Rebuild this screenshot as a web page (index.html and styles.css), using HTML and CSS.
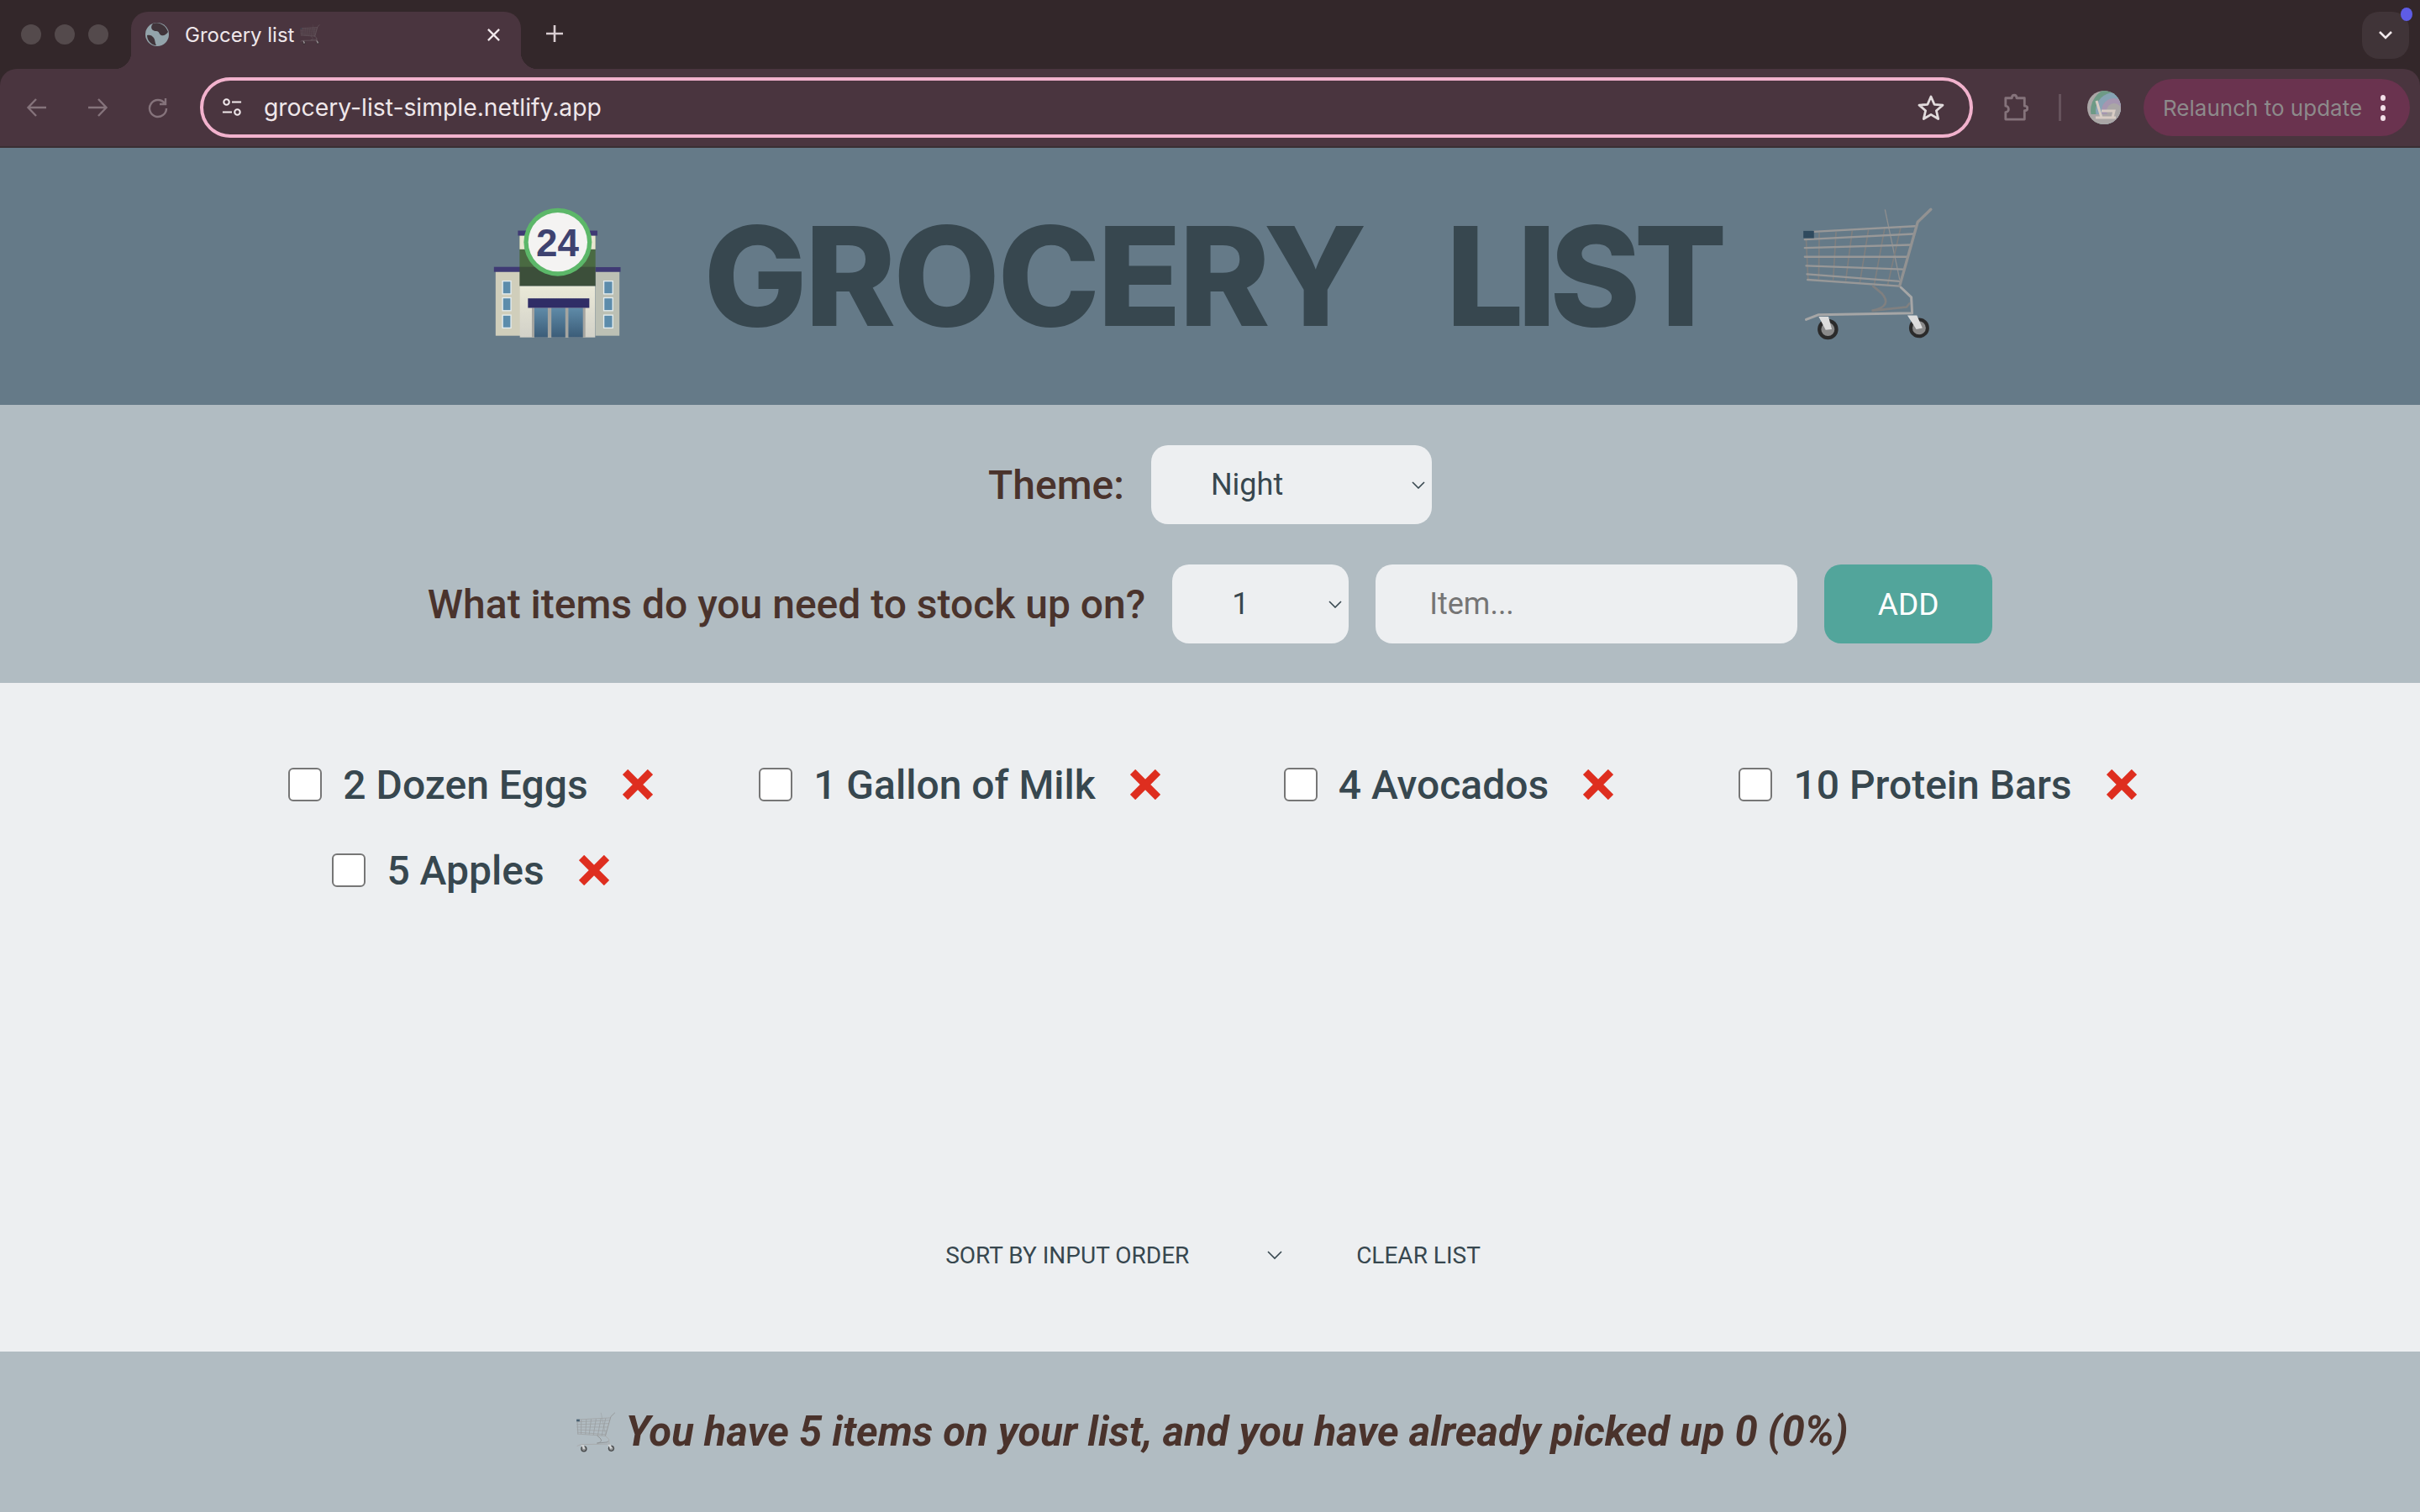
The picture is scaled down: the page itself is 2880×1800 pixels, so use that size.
FILE: index.html
```html
<!DOCTYPE html>
<html lang="en">
<head>
<meta charset="utf-8">
<title>Grocery list</title>
<link rel="stylesheet" href="styles.css">
</head>
<body>

<svg class="sprites" xmlns="http://www.w3.org/2000/svg">
  <defs>
    <linearGradient id="glass" x1="0" y1="0" x2="0" y2="1"><stop offset="0" stop-color="#5f8ba8"/><stop offset="1" stop-color="#3b5c78"/></linearGradient>
    <linearGradient id="cream" x1="0" y1="0" x2="0" y2="1"><stop offset="0" stop-color="#eae9d8"/><stop offset="1" stop-color="#d2d1c8"/></linearGradient>
    <symbol id="cart" viewBox="100 70 470 482">
      <g fill="none" stroke-linecap="round">
        <path d="M398 82 450 330" stroke="#8f8f8f" stroke-width="4"/>
        <g stroke="#7f7f7f" stroke-width="5">
          <path d="M162 165 160 328M222 162 212 332M280 158 257 335M338 155 308 340M396 150 360 345M453 148 408 348M115 188 122 332"/>
        </g>
        <g stroke="#989898" stroke-width="7">
          <path d="M140 160 505 140M110 188 498 168M110 218 490 207M110 250 475 250M115 282 462 295M118 312 450 338M120 332 450 355"/>
        </g>
        <path d="M450 355 515 125 562 80" stroke="#929292" stroke-width="10" stroke-linejoin="round"/>
        <path d="M355 355 385 380C412 410 405 432 350 443L475 430 485 418" stroke="#808080" stroke-width="8"/>
        <path d="M455 360 492 395 495 452M115 475 158 458 495 452" stroke="#a6a6a6" stroke-width="9" stroke-linejoin="round"/>
      </g>
      <rect x="105" y="157" width="38" height="26" fill="#2f4a5e"/>
      <circle cx="193" cy="510" r="37" fill="#2b2b2b"/>
      <circle cx="193" cy="510" r="24" fill="#8a8a8a"/>
      <circle cx="520" cy="505" r="36" fill="#2b2b2b"/>
      <circle cx="520" cy="505" r="24" fill="#8a8a8a"/>
      <path d="M160 465H195L207 510 185 512ZM478 460H512L532 505 510 510Z" fill="#dcdcdc"/>
    </symbol>
    <symbol id="store" viewBox="82 80 460 470">
      <rect x="90" y="310" width="88" height="230" fill="#d0cebb"/>
      <rect x="448" y="310" width="86" height="230" fill="#bcc0b4"/>
      <rect x="84" y="293" width="94" height="18" fill="#3f3a74"/>
      <rect x="448" y="294" width="90" height="17" fill="#3f3a74"/>
      <rect x="176" y="180" width="272" height="114" fill="#4a6a42"/>
      <rect x="176" y="293" width="272" height="69" fill="#3c4f3a"/>
      <rect x="176" y="180" width="272" height="50" fill="#e8e6d0"/>
      <rect x="170" y="163" width="285" height="18" fill="#3f3a74"/>
      <rect x="177" y="362" width="270" height="184" fill="url(#cream)"/>
      <rect x="220" y="440" width="192" height="106" fill="#a5a5a0"/>
      <rect x="229" y="440" width="48" height="106" fill="url(#glass)"/>
      <rect x="290" y="440" width="50" height="106" fill="url(#glass)"/>
      <rect x="351" y="440" width="52" height="106" fill="url(#glass)"/>
      <rect x="206" y="406" width="220" height="34" fill="#2f2d66"/>
      <g fill="#5c8cab" stroke="#e6eef0" stroke-width="4">
        <rect x="115" y="344" width="30" height="46"/>
        <rect x="115" y="404" width="30" height="46"/>
        <rect x="115" y="466" width="30" height="46"/>
        <rect x="478" y="344" width="32" height="46"/>
        <rect x="478" y="404" width="32" height="46"/>
        <rect x="478" y="466" width="32" height="46"/>
      </g>
      <circle cx="313" cy="204" r="122" fill="#5cb769"/>
      <circle cx="313" cy="204" r="106" fill="#f4f3f2"/>
      <text x="312" y="255" text-anchor="middle" class="store-num">24</text>
    </symbol>
  </defs>
</svg>

<div class="tabstrip">
  <div class="lights"><i></i><i></i><i></i></div>
  <div class="tab">
    <svg class="favicon" viewBox="0 0 28 28"><circle cx="14" cy="14" r="14" fill="#93a4ab"/><path d="M9 1C5 6 8 10 13 10c4 0 3 4 6 5s6-1 8-4C25 4 17-2 9 1ZM2 15c3-1 6 0 8 3s1 6 3 9C7 27 2 21 2 15Z" fill="#40343a"/></svg>
    <span class="tab-title">Grocery list</span>
    <svg class="tab-cart"><use href="#cart"/></svg>
    <svg class="tab-close" viewBox="0 0 18 18"><path d="M2 2 16 16M16 2 2 16" stroke="#f1e9ec" stroke-width="2.4" fill="none"/></svg>
  </div>
  <svg class="new-tab" viewBox="0 0 22 22"><path d="M11 1V21M1 11H21" stroke="#d9cdd1" stroke-width="2.6" fill="none"/></svg>
  <div class="tab-menu">
    <svg viewBox="0 0 18 12"><path d="M2 2 9 9 16 2" stroke="#f1e9ec" stroke-width="2.6" fill="none"/></svg>
    <b class="tab-dot"></b>
  </div>
</div>

<div class="toolbar">
  <svg class="nav-icon" viewBox="0 0 26 26"><path d="M24 13H3M12 3 2.5 13 12 23" stroke="#85737b" stroke-width="2.4" fill="none"/></svg>
  <svg class="nav-icon" viewBox="0 0 26 26"><path d="M2 13H23M14 3 23.500 13 14 23" stroke="#85737b" stroke-width="2.4" fill="none"/></svg>
  <svg class="nav-icon" viewBox="0 0 26 26"><path d="M21 8A10 10 0 1 0 23 14M22 2V9H15" stroke="#85737b" stroke-width="2.4" fill="none"/></svg>
  <div class="omnibox">
    <svg class="site-icon" viewBox="0 0 26 26"><g stroke="#f1e9ec" stroke-width="2.2" fill="none"><circle cx="6" cy="6" r="3.500"/><path d="M13 6H25M1 19H13"/><circle cx="20" cy="19" r="3.500"/></g></svg>
    <span class="url">grocery-list-simple.netlify.app</span>
    <svg class="star" viewBox="0 0 32 32"><path d="M16 3 20 12.300 30 13.200 22.400 19.800 24.700 29.500 16 24.400 7.300 29.500 9.600 19.800 2 13.200 12 12.300Z" stroke="#e2dcdd" stroke-width="2.800" fill="none" stroke-linejoin="round"/></svg>
  </div>
  <svg class="puzzle" viewBox="0 0 32 38"><path d="M3 7H11C11 2 17 2 17 7H27V17C32 17 32 23 27 23V34H3V25C8 25 8 17 3 17Z" stroke="#85737b" stroke-width="3" fill="none" stroke-linejoin="round"/></svg>
  <i class="divider"></i>
  <svg class="avatar" viewBox="0 0 40 40"><clipPath id="av"><circle cx="20" cy="20" r="20"/></clipPath><g clip-path="url(#av)"><rect width="40" height="40" fill="#aaa6a6"/><circle cx="32" cy="24" r="28" fill="#6e9a86"/><circle cx="32" cy="24" r="22" fill="#87a3b5"/><circle cx="32" cy="24" r="15" fill="#a596b0"/><circle cx="32" cy="24" r="9" fill="#aaa6a6"/><rect y="28" width="40" height="12" fill="#aaa6a6"/><path d="M11 12 17 32M17 24H32L30 32M10 32H34" stroke="#d8ccc4" stroke-width="3" fill="none"/></g></svg>
  <div class="relaunch">
    <span>Relaunch to update</span>
    <span class="dots"><i></i><i></i><i></i></span>
  </div>
</div>

<header class="banner">
  <svg class="banner-store"><use href="#store"/></svg>
  <h1 class="title">GROCERY <span class="title-last">LIST</span></h1>
  <svg class="banner-cart"><use href="#cart"/></svg>
</header>

<section class="controls">
  <div class="control-row theme-row">
    <label class="label">Theme:</label>
    <select class="field theme-select"><option>Night</option></select>
  </div>
  <form class="control-row add-row">
    <label class="label">What items do you need to stock up on?</label>
    <select class="field qty-select"><option>1</option></select>
    <input class="field item-input" type="text" placeholder="Item...">
    <button class="add-btn" type="button">ADD</button>
  </form>
</section>

<main class="list">
  <ul class="items">
    <li class="item"><input type="checkbox"><span>2 Dozen Eggs</span><svg class="del" viewBox="0 0 36 36"><path d="M3 3 33 33M33 3 3 33" stroke="#de2e1f" stroke-width="9" fill="none"/></svg></li>
    <li class="item"><input type="checkbox"><span>1 Gallon of Milk</span><svg class="del" viewBox="0 0 36 36"><path d="M3 3 33 33M33 3 3 33" stroke="#de2e1f" stroke-width="9" fill="none"/></svg></li>
    <li class="item"><input type="checkbox"><span>4 Avocados</span><svg class="del" viewBox="0 0 36 36"><path d="M3 3 33 33M33 3 3 33" stroke="#de2e1f" stroke-width="9" fill="none"/></svg></li>
    <li class="item"><input type="checkbox"><span>10 Protein Bars</span><svg class="del" viewBox="0 0 36 36"><path d="M3 3 33 33M33 3 3 33" stroke="#de2e1f" stroke-width="9" fill="none"/></svg></li>
    <li class="item"><input type="checkbox"><span>5 Apples</span><svg class="del" viewBox="0 0 36 36"><path d="M3 3 33 33M33 3 3 33" stroke="#de2e1f" stroke-width="9" fill="none"/></svg></li>
  </ul>
  <div class="sort-bar">
    <select class="sort-select"><option>SORT BY INPUT ORDER</option></select>
    <button class="clear-btn" type="button">CLEAR LIST</button>
  </div>
</main>

<footer class="stats">
  <svg class="stats-cart"><use href="#cart"/></svg>
  <em>You have 5 items on your list, and you have already picked up 0 (0%)</em>
</footer>

</body>
</html>
```

FILE: styles.css
```css
*{ padding:0; margin:0; box-sizing:border-box; list-style:none; }
html,body{ width:2880px; height:1800px; overflow:hidden; }
body{ font-family:Roboto,"Liberation Sans",sans-serif; display:flex; flex-direction:column; background:#33272a; }
.sprites{ position:absolute; width:0; height:0; }
.store-num{ font-family:"Liberation Sans",sans-serif; font-weight:700; font-size:138px; fill:#3e4270; }

/* browser chrome */
.tabstrip{ height:82px; background:#33272a; display:flex; align-items:flex-end; flex:none; }
.lights{ display:flex; gap:16px; padding:0 26px 0 25px; align-self:flex-start; margin-top:29px; width:156px; }
.lights i{ width:24px; height:24px; border-radius:50%; background:#544a4c; }
.tab{ width:464px; height:68px; background:#4a353f; border-radius:20px 20px 0 0; display:flex; align-items:center; padding:0 24px 14px 17px; position:relative; }
.tab::before,.tab::after{ content:""; position:absolute; bottom:0; width:20px; height:20px; }
.tab::before{ left:-20px; background:radial-gradient(circle at 0 0,#33272a 20px,#4a353f 20.500px); }
.tab::after{ right:-20px; background:radial-gradient(circle at 100% 0,#33272a 20px,#4a353f 20.500px); }
.favicon{ width:28px; height:28px; flex:none; }
.tab-title{ font-family:Inter,sans-serif; font-size:24px; color:#efe7ea; margin-left:19px; }
.tab-cart{ width:24px; height:24px; margin-left:7px; opacity:.55; }
.tab-close{ width:17px; height:17px; margin-left:auto; }
.new-tab{ width:22px; height:22px; margin:0 0 31px 29px; }
.tab-menu{ width:56px; height:56px; margin:0 13px 12px auto; background:#403438; border-radius:20px; display:flex; align-items:center; justify-content:center; position:relative; }
.tab-menu svg{ width:18px; height:12px; }
.tab-dot{ position:absolute; right:-4px; top:-5px; width:14px; height:16px; border-radius:50%; background:#5e5ce6; }

.toolbar{ height:94px; background:#4a353f; border-bottom:2px solid #3a2e33; border-radius:20px 20px 0 0; display:flex; align-items:center; padding:0 12px 0 31px; flex:none; }
.nav-icon{ width:26px; height:26px; margin-right:46px; flex:none; }
.nav-icon:nth-child(3){ margin-right:37px; }
.omnibox{ width:2110px; height:72px; border:4px solid #f2b2cd; border-radius:36px; display:flex; align-items:center; padding:0 30px 0 22px; flex:none; }
.site-icon{ width:24px; height:24px; flex:none; }
.url{ font-family:Inter,sans-serif; font-size:28.300px; color:#efe7ea; margin-left:26px; }
.star{ width:32px; height:32px; margin-left:auto; }
.puzzle{ width:30px; height:36px; margin-left:36px; flex:none; }
.divider{ width:3px; height:32px; background:#66535c; margin-left:36px; flex:none; }
.avatar{ width:40px; height:40px; margin-left:31px; flex:none; }
.relaunch{ width:317px; height:68px; margin-left:27px; background:#6a334f; border-radius:34px; display:flex; align-items:center; justify-content:space-between; padding:0 29px 0 23px; font-family:Inter,sans-serif; font-size:26px; color:#8d8a8b; flex:none; }
.dots{ display:flex; flex-direction:column; gap:5px; }
.dots i{ width:6px; height:7px; border-radius:50%; background:#f1dfe7; }

/* page */
.banner{ height:306px; background:#657a88; display:flex; align-items:center; justify-content:center; padding-left:8px; flex:none; }
.title{ font-family:Inter,sans-serif; font-weight:800; font-size:164px; line-height:1; color:#37474f; letter-spacing:-3px; word-spacing:64px; margin:0 96px 0 97px; }
.title-last{ letter-spacing:-8px; }
.banner-store{ width:153px; height:156px; margin-bottom:8px; flex:none; }
.banner-cart{ width:157px; height:160px; margin-bottom:6px; flex:none; }

.controls{ height:331px; background:#b1bcc2; display:flex; flex-direction:column; align-items:center; gap:48px; padding-top:48px; flex:none; }
.control-row{ display:flex; align-items:center; gap:32px; }
.label{ font-size:48px; font-weight:500; color:#4a332c; }
.field{ height:94px; border:0; border-radius:20px; background:#edeff1; font-family:Roboto,sans-serif; font-size:36px; color:#37474f; outline:0; }
select.field{ appearance:none; padding-left:71px; background-image:url("data:image/svg+xml,%3Csvg xmlns='http://www.w3.org/2000/svg' width='16' height='10'%3E%3Cpath d='M1 2 8 9 15 2' stroke='%2337474f' stroke-width='1.600' fill='none'/%3E%3C/svg%3E"); background-repeat:no-repeat; background-position:right 8px center; }
.theme-select{ width:334px; }
.qty-select{ width:210px; }
.item-input{ width:502px; padding-left:64px; }
.item-input::placeholder{ color:#757575; }
.add-btn{ width:200px; height:94px; border:0; border-radius:20px; background:#52a59b; color:#fff; font-family:Roboto,sans-serif; font-size:37px; }

.list{ flex:1; display:flex; flex-direction:column; justify-content:space-between; padding:70px 0 85px; background:#edeff1; }
.items{ display:grid; grid-template-columns:repeat(4,582px); grid-auto-rows:102px; justify-content:center; padding-right:14px; }
.item{ display:flex; align-items:center; justify-content:center; font-size:48px; font-weight:500; color:#37474f; }
.item input{ appearance:none; width:40px; height:40px; background:#fff; border:2px solid #767676; border-radius:6px; margin-right:25px; flex:none; }
.del{ width:36px; height:36px; margin-left:41px; flex:none; }
.sort-bar{ height:60px; display:flex; align-items:center; justify-content:center; gap:85px; padding-left:7px; }
.sort-select{ appearance:none; width:404px; border:0; background-color:transparent; font-family:Roboto,sans-serif; font-size:28px; color:#37474f; outline:0; background-image:url("data:image/svg+xml,%3Csvg xmlns='http://www.w3.org/2000/svg' width='18' height='12'%3E%3Cpath d='M1 2 9 10 17 2' stroke='%2337474f' stroke-width='1.600' fill='none'/%3E%3C/svg%3E"); background-repeat:no-repeat; background-position:right 3px center; }
.clear-btn{ border:0; background:none; font-family:Roboto,sans-serif; font-size:28px; color:#37474f; }

.stats{ height:191px; background:#b1bcc2; display:flex; align-items:center; justify-content:center; gap:8px; padding-left:2px; font-size:49px; font-weight:700; color:#4a332c; flex:none; }
.stats-cart{ width:54px; height:48px; flex:none; opacity:.8; }
```
